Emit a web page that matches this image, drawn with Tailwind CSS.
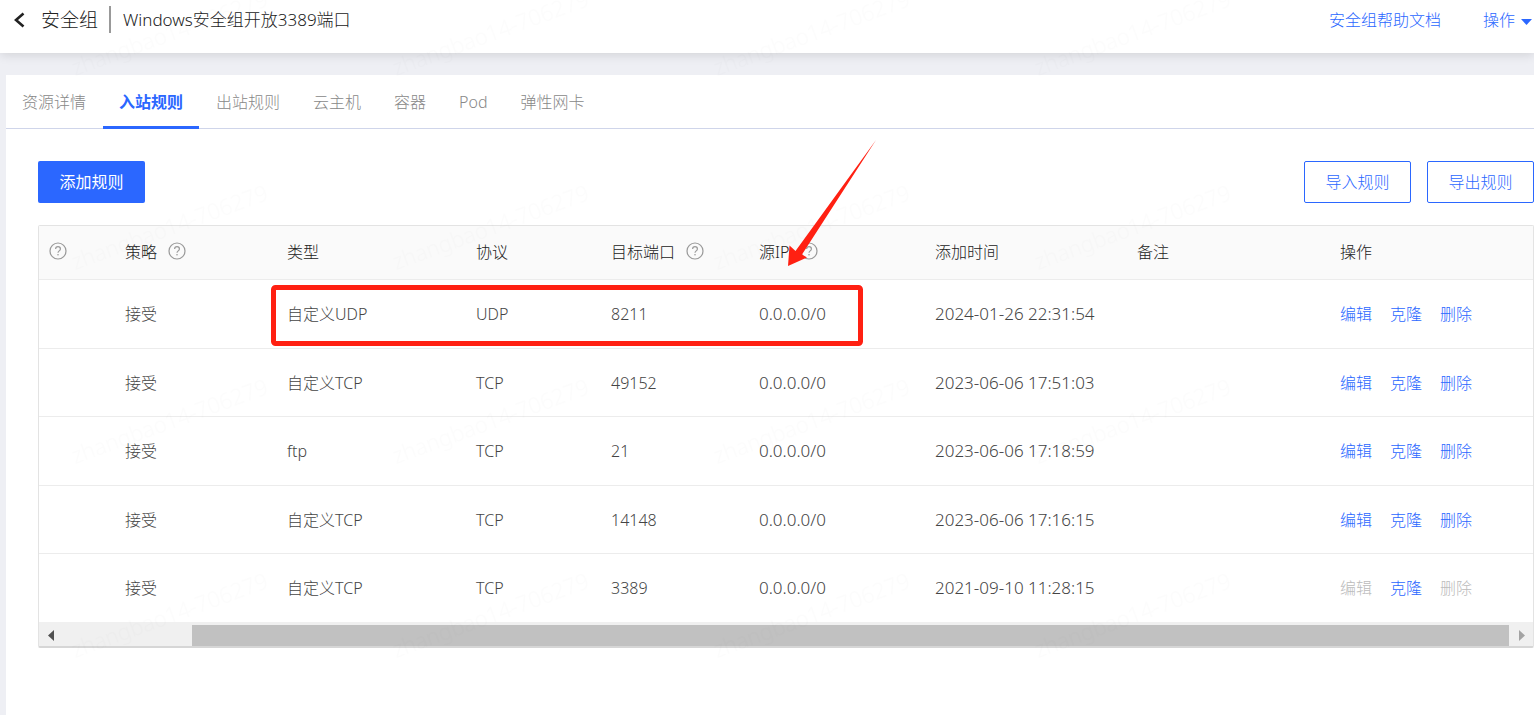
<!DOCTYPE html>
<html lang="zh-CN">
<head>
<meta charset="utf-8">
<meta name="viewport" content="width=device-width, initial-scale=1">
<title>安全组</title>
<script src="https://cdn.jsdelivr.net/npm/@tailwindcss/browser@4"></script>
</head>
<body class="relative flex min-h-screen flex-col overflow-x-hidden bg-[#eeeff4] font-['Noto_Sans','Noto_Sans_CJK_SC',sans-serif] text-base leading-6 font-light text-[#444]">

<svg class="hidden" aria-hidden="true">
  <symbol id="help" viewBox="0 0 18 18">
    <circle cx="9" cy="9" r="8" fill="none" stroke="#999" stroke-width="1.200"/>
    <path d="M6.6 7.1C6.6 5.6 7.6 4.7 9 4.7s2.4.9 2.4 2.2c0 1.9-2.4 2-2.4 3.9" fill="none" stroke="#999" stroke-width="1.200"/>
    <circle cx="9" cy="12.8" r=".8" fill="#999"/>
  </symbol>
</svg>

<header class="z-10 flex h-[53px] items-start bg-white pl-3 shadow-[0_2px_10px_rgba(0,0,0,0.12)]">
  <button type="button" aria-label="返回" class="mt-3 mr-[14px] flex h-4 w-[15px] items-center">
    <svg class="h-4 w-[15px]" viewBox="0 0 15 16" fill="none" stroke="#222" stroke-width="2.6"><path d="M11.500 1.500 4 8l7.500 6.500"/></svg>
  </button>
  <h1 class="mt-2 text-[19px] leading-6 text-[#222]">安全组</h1>
  <span class="mt-1.5 ml-[11px] h-[27px] w-0.5 bg-[#999]"></span>
  <span class="mt-2 ml-3 text-[17px] text-[#222]">Windows安全组开放3389端口</span>
  <nav class="mt-2 ml-auto flex text-[#2b67ff]">
    <a href="#" class="mr-[42px]">安全组帮助文档</a>
    <button type="button" class="mr-0.5 flex items-center gap-[6px]">操作
      <svg class="mt-1 h-1.5 w-[11px]" viewBox="0 0 11 6"><path d="M0 0h11L5.500 6z" fill="#2b67ff"/></svg>
    </button>
  </nav>
</header>

<main class="mt-[22px] ml-1.5 flex-1 bg-white">
  <nav class="flex h-[54px] gap-px border-b border-[#cfd5ea] text-[#888]">
    <a href="#" class="flex h-[54px] items-center px-4">资源详情</a>
    <a href="#" aria-current="page" class="flex h-[54px] items-center border-b-3 border-[#2b67ff] px-4 pt-[3px] font-bold text-[#2b67ff]">入站规则</a>
    <a href="#" class="flex h-[54px] items-center px-4">出站规则</a>
    <a href="#" class="flex h-[54px] items-center px-4">云主机</a>
    <a href="#" class="flex h-[54px] items-center px-4">容器</a>
    <a href="#" class="flex h-[54px] items-center px-4">Pod</a>
    <a href="#" class="flex h-[54px] items-center px-4">弹性网卡</a>
  </nav>

  <section class="pt-8 pl-8">
    <div class="flex gap-4">
      <button type="button" class="mr-auto h-[42px] w-[107px] rounded-xs bg-[#2b67ff] font-normal text-white">添加规则</button>
      <button type="button" class="h-[42px] w-[107px] rounded-xs border border-[#2b67ff] text-[#2b67ff]">导入规则</button>
      <button type="button" class="h-[42px] w-[107px] rounded-xs border border-[#2b67ff] text-[#2b67ff]">导出规则</button>
    </div>

    <div class="mt-[22px] rounded-xs border border-b-2 border-[#e3e3e3] border-b-[#d6d6d6]">
      <table class="w-full table-fixed border-separate border-spacing-0 text-left [&_td]:border-b [&_td]:border-[#ececec] [&_td]:pl-[10px] [&_th]:border-b [&_th]:border-[#ececec] [&_th]:pb-0.5 [&_th]:pl-[10px] [&_th]:font-light [&_th_svg]:mb-0.5 [&_tbody_tr:last-child_td]:border-b-0">
        <colgroup>
          <col class="w-[76px]"><col class="w-[162px]"><col class="w-[189px]"><col class="w-[135px]"><col class="w-[148px]"><col class="w-[176px]"><col class="w-[202px]"><col class="w-[203px]"><col class="w-[203px]">
        </colgroup>
        <thead class="bg-[#fafafa] text-[#222]">
          <tr class="h-[54px]">
            <th scope="col"><svg class="h-[18px] w-[18px]" role="img" aria-label="说明"><use href="#help"/></svg></th>
            <th scope="col"><span class="flex items-center gap-[11px]">策略<svg class="h-[18px] w-[18px]" aria-hidden="true"><use href="#help"/></svg></span></th>
            <th scope="col">类型</th>
            <th scope="col">协议</th>
            <th scope="col"><span class="flex items-center gap-[11px]">目标端口<svg class="h-[18px] w-[18px]" aria-hidden="true"><use href="#help"/></svg></span></th>
            <th scope="col"><span class="flex items-center gap-[11px]">源IP<svg class="h-[18px] w-[18px]" aria-hidden="true"><use href="#help"/></svg></span></th>
            <th scope="col">添加时间</th>
            <th scope="col">备注</th>
            <th scope="col">操作</th>
          </tr>
        </thead>
        <tbody>
          <tr class="h-[69px]"><td></td><td>接受</td><td>自定义UDP</td><td>UDP</td><td>8211</td><td class="text-[17px]">0.0.0.0/0</td><td class="text-[17px]">2024-01-26 22:31:54</td><td></td>
            <td><span class="flex gap-[18px] text-[#2b67ff]"><a href="#">编辑</a><a href="#">克隆</a><a href="#">删除</a></span></td></tr>
          <tr class="h-[68px]"><td></td><td>接受</td><td>自定义TCP</td><td>TCP</td><td>49152</td><td class="text-[17px]">0.0.0.0/0</td><td class="text-[17px]">2023-06-06 17:51:03</td><td></td>
            <td><span class="flex gap-[18px] text-[#2b67ff]"><a href="#">编辑</a><a href="#">克隆</a><a href="#">删除</a></span></td></tr>
          <tr class="h-[69px]"><td></td><td>接受</td><td>ftp</td><td>TCP</td><td>21</td><td class="text-[17px]">0.0.0.0/0</td><td class="text-[17px]">2023-06-06 17:18:59</td><td></td>
            <td><span class="flex gap-[18px] text-[#2b67ff]"><a href="#">编辑</a><a href="#">克隆</a><a href="#">删除</a></span></td></tr>
          <tr class="h-[68px]"><td></td><td>接受</td><td>自定义TCP</td><td>TCP</td><td>14148</td><td class="text-[17px]">0.0.0.0/0</td><td class="text-[17px]">2023-06-06 17:16:15</td><td></td>
            <td><span class="flex gap-[18px] text-[#2b67ff]"><a href="#">编辑</a><a href="#">克隆</a><a href="#">删除</a></span></td></tr>
          <tr class="h-[68px]"><td></td><td>接受</td><td>自定义TCP</td><td>TCP</td><td>3389</td><td class="text-[17px]">0.0.0.0/0</td><td class="text-[17px]">2021-09-10 11:28:15</td><td></td>
            <td><span class="flex gap-[18px] text-[#bbb]"><a aria-disabled="true">编辑</a><a href="#" class="text-[#2b67ff]">克隆</a><a aria-disabled="true">删除</a></span></td></tr>
        </tbody>
      </table>
      <!-- horizontal scrollbar -->
      <div class="flex h-6 bg-[#f0f0f0] pt-[3px]">
        <button type="button" aria-label="向左滚动" class="mr-[129px] flex w-6 items-center pl-[9px]"><svg class="h-[11px] w-1.5" viewBox="0 0 6 11"><path d="M6 0v11L0 5.500z" fill="#505050"/></svg></button>
        <div class="flex-1 bg-[#c1c1c1]"></div>
        <button type="button" aria-label="向右滚动" class="flex w-6 items-center pl-[10px]"><svg class="h-[11px] w-1.5" viewBox="0 0 6 11"><path d="M0 0v11l6-5.500z" fill="#a3a3a3"/></svg></button>
      </div>
    </div>
  </section>
</main>

<!-- watermark and hand-drawn callout laid over the page -->
<svg class="pointer-events-none absolute inset-0 z-20 h-full w-full" aria-hidden="true">
  <defs>
    <pattern id="mark" x="60" y="-104" width="321" height="194" patternUnits="userSpaceOnUse">
      <text transform="translate(15 180) rotate(-20)" font-size="22" fill="#000" fill-opacity=".012">zhangbao14-706279</text>
    </pattern>
  </defs>
  <rect width="1340" height="100%" fill="url(#mark)"/>
  <rect x="273.500" y="287.500" width="587" height="56" rx="2" fill="none" stroke="#ff2012" stroke-width="5"/>
  <path d="M876 140 795.500 251 789.500 245.500 788 266 807 257.500 802 254.500Z" fill="#ff2012"/>
</svg>
</body>
</html>
